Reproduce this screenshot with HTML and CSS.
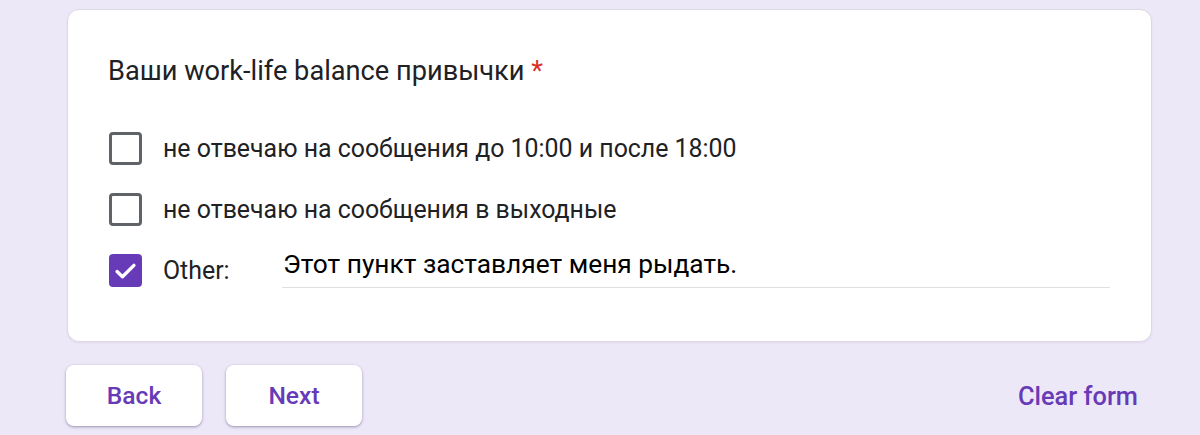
FILE: index.html
```html
<!DOCTYPE html>
<html lang="ru">
<head>
<meta charset="utf-8">
<link rel="stylesheet" href="styles.css">
</head>
<body>
<div class="page">
  <div class="card">
    <div class="title">Ваши work-life balance привычки <span class="req">*</span></div>
    <div class="options">
      <label class="row">
        <span class="box"></span>
        <span class="opt">не отвечаю на сообщения до 10:00 и после 18:00</span>
      </label>
      <label class="row">
        <span class="box"></span>
        <span class="opt">не отвечаю на сообщения в выходные</span>
      </label>
      <label class="row">
        <span class="box checked">
          <svg viewBox="0 0 24 24" width="28" height="28"><path d="M4.5 12.5l4.8 4.6L19.5 7" fill="none" stroke="#fff" stroke-width="3" stroke-linecap="round" stroke-linejoin="round"/></svg>
        </span>
        <span class="opt other-label">Other:</span>
        <span class="other-input">Этот пункт заставляет меня рыдать.</span>
      </label>
    </div>
  </div>
  <div class="actions">
    <div class="btns">
      <button class="btn">Back</button>
      <button class="btn">Next</button>
    </div>
    <button class="clear">Clear form</button>
  </div>
</div>
</body>
</html>
```

FILE: styles.css
```css
html, body {
  margin: 0;
  padding: 0;
}
body {
  background: #ede8f7;
  font-family: Roboto, "Liberation Sans", sans-serif;
  color: #202124;
  width: 1200px;
  height: 435px;
  overflow: hidden;
}
.page {
  padding: 9px 48px 0 67px;
}
.card {
  background: #fff;
  border-radius: 12px;
  border: 1px solid #dcd8e4;
  box-shadow: 0 1px 2px rgba(60, 40, 120, 0.08);
  padding: 44px 41px 0 40px;
  box-sizing: border-box;
  height: 333px;
}
.title {
  font-size: 27.2px;
  line-height: 34px;
  color: #202124;
}
.req {
  color: #d93025;
}
.options {
  margin-top: 30px;
  display: flex;
  flex-direction: column;
}
.row {
  height: 61px;
  display: flex;
  align-items: center;
}
.box {
  width: 33px;
  height: 33px;
  box-sizing: border-box;
  border: 3px solid #5f6368;
  border-radius: 4px;
  margin-left: 1px;
  margin-right: 21px;
  flex: none;
  display: flex;
  align-items: center;
  justify-content: center;
}
.box.checked {
  background: #673ab7;
  border-color: #673ab7;
}
.opt {
  font-size: 24.9px;
  color: #202124;
}
.other-label {
  width: 119px;
  flex: none;
}
.other-input {
  flex: 1;
  font-size: 26.3px;
  color: #000;
  align-self: stretch;
  display: flex;
  align-items: center;
  border-bottom: 1.5px solid #e0e0e0;
  height: 47px;
  margin-top: 1px;
  padding-left: 1px;
  box-sizing: border-box;
}
.actions {
  margin-top: 23px;
  display: flex;
  align-items: center;
  justify-content: space-between;
}
.btns {
  display: flex;
  gap: 24px;
}
.btn {
  width: 136px;
  height: 61px;
  border: none;
  border-radius: 8px;
  background: #fff;
  box-shadow: 0 1px 2px rgba(60, 40, 100, 0.3), 0 1px 3px 1px rgba(60, 40, 100, 0.12);
  font-family: Roboto, "Liberation Sans", sans-serif;
  font-weight: 500;
  font-size: 24.6px;
  color: #673ab7;
  margin-left: -1px;
  padding: 0;
}
.btn + .btn {
  margin-left: 0;
}
.clear {
  border: none;
  background: transparent;
  font-family: Roboto, "Liberation Sans", sans-serif;
  font-weight: 500;
  font-size: 25.4px;
  color: #673ab7;
  padding: 0 14px;
  margin-right: 0;
}
```
